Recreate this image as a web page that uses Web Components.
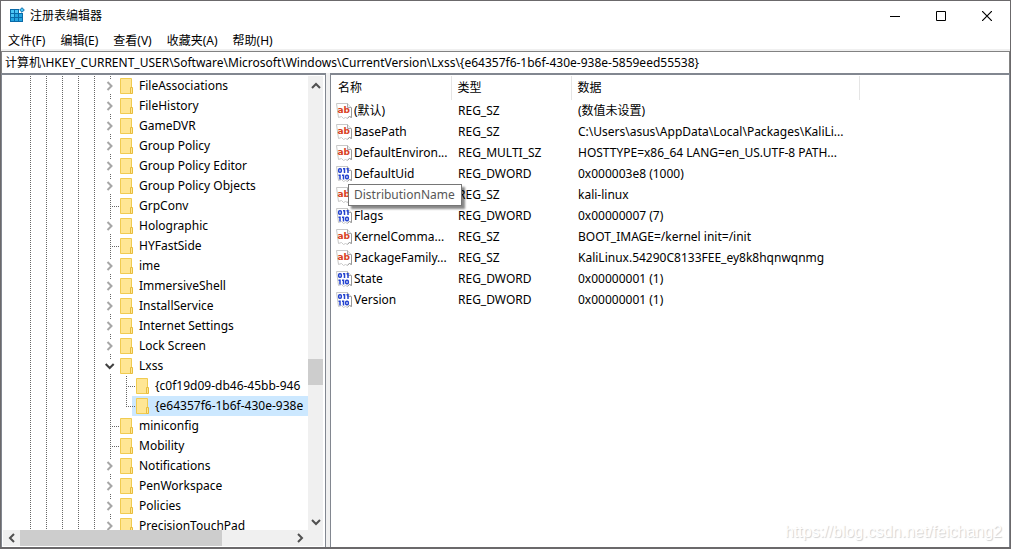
<!DOCTYPE html>
<html lang="zh-CN">
<head>
<meta charset="utf-8">
<title>注册表编辑器</title>
<style>
html,body{height:100%;margin:0}
body{font:12px/20px "Noto Sans","Noto Sans CJK SC",sans-serif;color:#000;background:#fff;overflow:hidden}
</style>
</head>
<body>
<reg-window></reg-window>
<script>
const define=(name,css,html)=>{
  customElements.define(name,class extends HTMLElement{
    connectedCallback(){
      if(this.shadowRoot)return;
      const root=this.attachShadow({mode:'open'});
      root.innerHTML=`<style>*{box-sizing:border-box}${css}</style>${typeof html==='function'?html(this):html}`;
    }
  });
};

define('reg-titlebar',`
:host{display:flex;align-items:flex-start;height:32px;padding-left:8px;box-sizing:border-box}
.logo{width:16px;height:16px;flex:none;margin-top:6px}
h1{font:inherit;line-height:29px;margin:0 0 0 5px;flex:1}
button{width:46px;height:29px;padding:0;border:0;background:none;display:grid;place-items:center}
`,`
<svg class="logo" viewBox="0 0 16 16" aria-hidden="true"><path fill="#0a6aa8" d="M1 2h9v4h4v9H1z"/><path fill="#4cc5f4" d="M2 3h3v3H2zM6 3h3v3H6zM2 7h3v3H2z"/><path fill="#25a5e0" d="M6 7h3v3H6zM10 7h3v3h-3zM2 11h3v3H2zM6 11h3v3H6zM10 11h3v3h-3z"/><path fill="#4cc5f4" stroke="#0a6aa8" d="m13 .7 2.3 2.3L13 5.300 10.700 3z"/></svg>
<h1>注册表编辑器</h1>
<button aria-label="最小化"><svg width="10" height="10"><path d="M0 5.500h10" stroke="#000"/></svg></button>
<button aria-label="最大化"><svg width="10" height="10"><path d="M.5.5h9v9h-9z" fill="none" stroke="#000"/></svg></button>
<button aria-label="关闭"><svg width="10" height="10"><path d="m0 0 10 10M10 0 0 10" stroke="#000" stroke-width="1.200"/></svg></button>
`);

define('reg-menubar',`
:host{display:flex;height:16px;align-items:center;gap:1px}
button{font:inherit;color:inherit;border:0;background:none;padding:0 7px;line-height:20px}
`,`<button>文件(F)</button><button>编辑(E)</button><button>查看(V)</button><button>收藏夹(A)</button><button>帮助(H)</button>`);

define('reg-address',`
:host{display:block;border-top:2px solid #f0f0f0;flex:none}
input{display:block;width:100%;height:22px;margin:0;border:1px solid #828282;border-width:1px 1px 0;padding:0 3px 1px;font:inherit;color:#000;outline:0;background:#fff}
`,`<input aria-label="地址" value="计算机\\HKEY_CURRENT_USER\\Software\\Microsoft\\Windows\\CurrentVersion\\Lxss\\{e64357f6-1b6f-430e-938e-5859eed55538}">`);

define('reg-node',`
:host{display:flex;height:20px;white-space:nowrap;align-items:stretch}
i{width:16px;flex:none;display:grid;place-items:center;position:relative}
.v{background:repeating-linear-gradient(#666 0 1px,transparent 1px 2px) 8px 0/1px 100% no-repeat}
.end{background-size:1px 11px}
.h::after{content:"";position:absolute;left:10px;top:10px;width:7px;height:1px;background:repeating-linear-gradient(90deg,#666 0 1px,transparent 1px 2px)}
.mark{background:#fff;display:block}
.item{display:flex;align-items:center;padding-left:2px;flex:1}
.sel{background:#cce8ff}
.folder{flex:none;margin-right:6px}
:host([level="1"]) .item{margin-left:-2px;padding-left:4px}
`,el=>{
  const child=el.getAttribute('level')==='1',kind=el.getAttribute('kind')||'closed';
  let cells='<i class="v"></i>'.repeat(child?6:5);
  if(kind==='leaf')cells+=`<i class="v h${el.hasAttribute('last')?' end':''}"></i>`;
  else{
    const d=kind==='open'?'m.7 5 4 4 4-4':'m2.500 3 4 4-4 4';
    cells+=`<i class="v"><svg class="mark" width="10" height="14" viewBox="0 0 10 14"><path d="${d}" fill="none" stroke="${kind==='open'?'#404040':'#a6a6a6'}" stroke-width="2"/></svg></i>`;
  }
  return cells+`<div class="item${el.hasAttribute('selected')?' sel':''}"><svg class="folder" width="13" height="16" viewBox="0 0 13 16" aria-hidden="true"><path d="M.5.5h11v15H.5z" fill="#ffe694" stroke="#f0cb50"/><path d="M10.500 9.500h2v6h-2z" fill="#ffe694" stroke="#e8bd3c"/></svg><slot></slot></div>`;
});

define('reg-scrollbar',`
:host{display:flex;align-items:center;justify-content:space-between;background:#f0f0f0;flex:none}
:host([dir=v]){flex-direction:column;width:15px}
:host([dir=h]){height:16px}
button{flex:none;border:0;padding:0;background:none;display:grid;place-items:center;width:17px;height:17px}
:host([dir=v]) button{width:15px}
:host([dir=h]) button{height:16px}
.track{flex:1;display:flex;align-self:stretch}
:host([dir=v]) .track{flex-direction:column}
.before{flex:var(--before)}.thumb{flex:var(--thumb);background:#cdcdcd}.after{flex:var(--after)}
`,el=>{
  const v=el.getAttribute('dir')==='v';
  const svg=d=>`<svg width="10" height="10"><path d="${d}" fill="none" stroke="#505050" stroke-width="2"/></svg>`;
  return `<button aria-label="后退">${svg(v?'m1 8 4-4 4 4':'m7 1-4 4 4 4')}</button><div class="track"><div class="before"></div><div class="thumb"></div><div class="after"></div></div><button aria-label="前进">${svg(v?'m1 3 4 4 4-4':'m3 1 4 4-4 4')}</button>`;
});

define('reg-tree',`
:host{display:flex;flex-direction:column;min-height:0;padding:1px 2px 1px 1px;border:1px solid #828790;border-top-width:2px;border-bottom:0}
.main{flex:1;display:flex;min-height:0}
.nodes{flex:1;min-width:0;overflow:hidden;padding-left:19px}
.v{--before:265;--thumb:26;--after:128}
.h{--before:0;--thumb:201;--after:69}
.bottom{display:flex;background:#f0f0f0}
.bottom reg-scrollbar{flex:1}
.corner{width:15px}
`,`
<div class="main"><div class="nodes">
<reg-node>FileAssociations</reg-node><reg-node>FileHistory</reg-node><reg-node>GameDVR</reg-node><reg-node>Group Policy</reg-node><reg-node>Group Policy Editor</reg-node><reg-node>Group Policy Objects</reg-node><reg-node kind="leaf">GrpConv</reg-node><reg-node>Holographic</reg-node><reg-node kind="leaf">HYFastSide</reg-node><reg-node>ime</reg-node><reg-node>ImmersiveShell</reg-node><reg-node>InstallService</reg-node><reg-node>Internet Settings</reg-node><reg-node>Lock Screen</reg-node><reg-node kind="open">Lxss</reg-node><reg-node level="1" kind="leaf">{c0f19d09-db46-45bb-946</reg-node><reg-node level="1" kind="leaf" last selected>{e64357f6-1b6f-430e-938e</reg-node><reg-node kind="leaf">miniconfig</reg-node><reg-node kind="leaf">Mobility</reg-node><reg-node>Notifications</reg-node><reg-node>PenWorkspace</reg-node><reg-node>Policies</reg-node><reg-node>PrecisionTouchPad</reg-node>
</div><reg-scrollbar class="v" dir="v"></reg-scrollbar></div>
<div class="bottom"><reg-scrollbar class="h" dir="h"></reg-scrollbar><div class="corner"></div></div>
`);

define('value-icon',`:host{display:block;width:16px;height:16px;flex:none}svg{display:block}text{font:bold 9px "DejaVu Sans",sans-serif}`,el=>{
  const page='<path d="M.5.5h11l4 4v10l-2-1-2 2-2-1-2 1-2-2-3 1z" fill="#fff" stroke="#c8c8c8"/><path d="M11.500.5v4h4" fill="#eee" stroke="#aaa"/><path d="M15.500 5v9.500l-2-1-2 1.500" fill="none" stroke="#999"/>';
  const glyph=el.getAttribute('kind')==='sz'
    ?'<text x="1.500" y="10" fill="#d8411f">ab</text>'
    :'<g fill="none" stroke="#2443cf" stroke-width="1.500"><rect x="2.700" y="2.700" width="2.600" height="3.600" rx="1"/><path d="M7 2.700h1.500V7M10.500 2.700H12V7M2.500 9.200H4v4.300M6 9.200h1.500v4.300"/><rect x="9.700" y="9.200" width="2.600" height="3.600" rx="1"/></g>';
  return `<svg width="16" height="16" viewBox="0 0 16 16" aria-hidden="true">${page}${glyph}</svg>`;
});

const values=[
['sz','(默认)','REG_SZ','(数值未设置)'],
['sz','BasePath','REG_SZ','C:\\Users\\asus\\AppData\\Local\\Packages\\KaliLi...'],
['sz','DefaultEnviron...','REG_MULTI_SZ','HOSTTYPE=x86_64 LANG=en_US.UTF-8 PATH...'],
['dw','DefaultUid','REG_DWORD','0x000003e8 (1000)'],
['sz','','REG_SZ','kali-linux','DistributionName'],
['dw','Flags','REG_DWORD','0x00000007 (7)'],
['sz','KernelComma...','REG_SZ','BOOT_IMAGE=/kernel init=/init'],
['sz','PackageFamily...','REG_SZ','KaliLinux.54290C8133FEE_ey8k8hqnwqnmg'],
['dw','State','REG_DWORD','0x00000001 (1)'],
['dw','Version','REG_DWORD','0x00000001 (1)']];

define('reg-values',`
:host{display:block;border:1px solid #828790;border-top-width:2px;border-bottom:0;overflow:hidden;padding-top:1px}
table{border-collapse:collapse;table-layout:fixed;width:529px}
th{font-weight:400;text-align:left;height:24px;padding:0 0 0 6px;border-right:1px solid #e5e5e5}
th:first-child{padding-left:7px}
td{height:21px;padding:0 0 0 7px;white-space:nowrap}
tbody td:first-child{padding-left:5px}
.name{display:flex;align-items:center;gap:2px;position:relative}
.tip{position:absolute;left:12px;top:-3px;height:22px;padding:0 6px 0 5px;border:1px solid #767676;background:#fff;color:#575757;box-shadow:3px 3px 2px #0007;line-height:20px;z-index:1}
`,`<table><colgroup><col style="width:120px"><col style="width:120px"><col></colgroup><thead><tr><th>名称</th><th>类型</th><th>数据</th></tr></thead><tbody>${values.map(([k,n,t,d,tip])=>`<tr><td><div class="name"><value-icon kind="${k}"></value-icon>${n}${tip?`<span class="tip" role="tooltip">${tip}</span>`:''}</div></td><td>${t}</td><td>${d}</td></tr>`).join('')}</tbody></table>`);

define('reg-window',`
:host{display:flex;flex-direction:column;height:100vh;box-sizing:border-box;border:1px solid #6b696b;border-bottom-width:2px;position:relative}
.panes{flex:1;min-height:0;display:grid;grid-template-columns:325px minmax(0,1fr);column-gap:4px;background:#f0f0f0}
reg-tree,reg-values{background:#fff}
.mark{position:absolute;right:8px;bottom:5px;font:16px/20px "Liberation Sans",sans-serif;color:#fff;text-shadow:1px 1px 1px #d0d0d0}
`,`<reg-titlebar></reg-titlebar><reg-menubar></reg-menubar><reg-address></reg-address><div class="panes"><reg-tree></reg-tree><reg-values></reg-values></div><span class="mark">https://blog.csdn.net/feichang2</span>`);
</script>
</body>
</html>
